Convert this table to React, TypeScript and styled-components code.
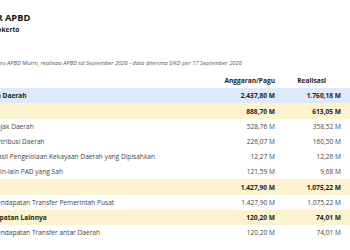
import styled, { createGlobalStyle } from "styled-components";

const GlobalStyle = createGlobalStyle`
  html, body {
    margin: 0;
    padding: 0;
    background: #ffffff;
    overflow: hidden;
  }
  body {
    font-family: "Open Sans", "Noto Sans", sans-serif;
    color: #222;
  }
`;

// the view is scrolled sideways, so the left part of the page sits off-screen
const Page = styled.div`
  width: calc(100% + 47px);
  margin-left: -47px;
  padding-top: 11.5px;
`;

const Heading = styled.div`
  padding-left: 3.8px;
`;

const Meta = styled.div`
  padding-left: 8.2px;
`;

const Title = styled.div`
  font-size: 9.3px;
  line-height: 12px;
  font-weight: 700;
  color: #151515;
  white-space: nowrap;
`;

const SubTitle = styled.div`
  margin-top: 1.5px;
  padding-left: 3px;
  font-size: 6.6px;
  line-height: 10px;
  font-weight: 700;
  color: #222;
  white-space: nowrap;
`;

const Note = styled.div`
  margin-top: 24px;
  font-size: 5.8px;
  line-height: 8px;
  font-style: italic;
  color: #555;
  white-space: nowrap;
`;

const Table = styled.div`
  margin-top: 5.3px;
`;

type Tone = "head" | "total" | "group" | "item";

const toneBg: Record<Tone, string> = {
  head: "transparent",
  total: "#dceafb",
  group: "#fdf3d1",
  item: "#ffffff",
};

const indent = [8, 26, 40];

const Row = styled.div<{ $tone: Tone }>`
  display: grid;
  grid-template-columns: 1fr 80px 66px;
  align-items: center;
  height: ${({ $tone }) => ($tone === "head" ? "16px" : "15.2px")};
  padding-right: 9px;
  background: ${({ $tone }) => toneBg[$tone]};
  font-size: 6.6px;
  font-weight: ${({ $tone }) => ($tone === "item" ? 400 : 700)};
  color: ${({ $tone }) => ($tone === "item" ? "#444" : "#222")};
  white-space: nowrap;
`;

const Label = styled.div<{ $level: number }>`
  padding-left: ${({ $level }) => indent[$level]}px;
  overflow: hidden;
`;

const Amount = styled.div<{ $pad?: number }>`
  text-align: right;
  padding-right: ${({ $pad }) => $pad ?? 0}px;
`;

type Line = {
  label: string;
  level: number;
  tone: Tone;
  budget: string;
  real: string;
};

const lines: Line[] = [
  { label: "Pendapatan Daerah", level: 0, tone: "total", budget: "2.437,80 M", real: "1.760,18 M" },
  { label: "PAD", level: 1, tone: "group", budget: "888,70 M", real: "613,05 M" },
  { label: "Pajak Daerah", level: 2, tone: "item", budget: "528,76 M", real: "358,52 M" },
  { label: "Retribusi Daerah", level: 2, tone: "item", budget: "226,07 M", real: "160,50 M" },
  { label: "Hasil Pengelolaan Kekayaan Daerah yang Dipisahkan", level: 2, tone: "item", budget: "12,27 M", real: "12,26 M" },
  { label: "Lain-lain PAD yang Sah", level: 2, tone: "item", budget: "121,59 M", real: "9,68 M" },
  { label: "TKD", level: 1, tone: "group", budget: "1.427,90 M", real: "1.075,22 M" },
  { label: "Pendapatan Transfer Pemerintah Pusat", level: 2, tone: "item", budget: "1.427,90 M", real: "1.075,22 M" },
  { label: "Pendapatan Lainnya", level: 1, tone: "group", budget: "120,20 M", real: "74,01 M" },
  { label: "Pendapatan Transfer antar Daerah", level: 2, tone: "item", budget: "120,20 M", real: "74,01 M" },
];

export default function App() {
  return (
    <Page>
      <GlobalStyle />
      <Heading>
        <Title>MONITOR APBD</Title>
        <Meta>
          <SubTitle>Kota Mojokerto</SubTitle>
          <Note>
            Anggaran bruto APBD Murni, realisasi APBD sd September 2026 - data diterima SIKD per 17 September 2026
          </Note>
        </Meta>
      </Heading>
      <Table>
        <Row $tone="head">
          <Label $level={0}>Uraian</Label>
          <Amount>Anggaran/Pagu</Amount>
          <Amount $pad={15}>Realisasi</Amount>
        </Row>
        {lines.map((l) => (
          <Row key={l.label} $tone={l.tone}>
            <Label $level={l.level}>{l.label}</Label>
            <Amount>{l.budget}</Amount>
            <Amount>{l.real}</Amount>
          </Row>
        ))}
      </Table>
    </Page>
  );
}
